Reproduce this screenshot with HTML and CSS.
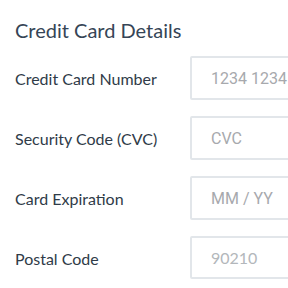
FILE: index.html
```html
<!DOCTYPE html>
<html lang="en">
<head>
  <meta charset="UTF-8">
  <meta name="viewport" content="width=device-width, initial-scale=1.0">
  <title>Credit Card Details</title>
  <link rel="stylesheet" href="styles.css">
</head>
<body>
  <div class="card-form">
    <h2>Credit Card Details</h2>
    <div class="rows">
      <label class="field-label" for="cc-number">Credit Card Number</label>
      <input class="field-input stripe" id="cc-number" type="text" placeholder="1234 1234 1234 1234">
      <label class="field-label" for="cc-cvc">Security Code (CVC)</label>
      <input class="field-input stripe" id="cc-cvc" type="text" placeholder="CVC">
      <label class="field-label" for="cc-exp">Card Expiration</label>
      <input class="field-input stripe" id="cc-exp" type="text" placeholder="MM / YY">
      <label class="field-label" for="cc-zip">Postal Code</label>
      <input class="field-input zip" id="cc-zip" type="text" placeholder="90210">
    </div>
  </div>
</body>
</html>
```

FILE: styles.css
```css
* {
  margin: 0;
  padding: 0;
  box-sizing: border-box;
}
body {
  font-family: 'Lato', sans-serif;
  background: #ffffff;
  color: #34414f;
  overflow: hidden;
}
.card-form {
  padding: 18px 0 0 15px;
}
h2 {
  font-size: 20px;
  font-weight: 400;
  line-height: 24px;
  color: #364556;
  margin-bottom: 14px;
}
.rows {
  display: grid;
  grid-template-columns: 175px 1fr;
  row-gap: 16px;
  align-items: center;
  overflow: hidden;
}
.field-label {
  font-size: 16px;
  line-height: 20px;
  padding-top: 2px;
  color: #2f3b48;
}
.field-input {
  width: calc(100% + 20px);
  height: 44px;
  border: 2px solid #e2e6ea;
  border-radius: 2px;
  padding-left: 19px;
  font-size: 16px;
  outline: none;
  background: #fff;
}
.field-input.stripe {
  font-family: 'Roboto', sans-serif;
}
.field-input.stripe::placeholder {
  color: #a7a9ad;
}
.field-input.zip {
  font-family: 'Lato', sans-serif;
  height: 43px;
}
.field-input.zip::placeholder {
  color: #b3b7bb;
}
```
